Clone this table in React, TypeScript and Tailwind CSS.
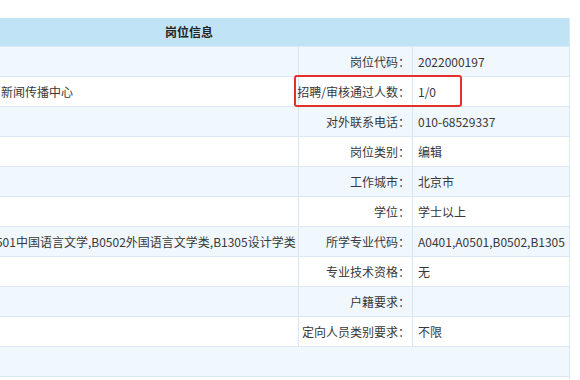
import React from "react"

const rows: { left?: React.ReactNode, label?: string, value?: string }[] = [
    { label: "岗位代码：", value: "2022000197" },
    { left: "新闻传播中心", label: "招聘/审核通过人数：", value: "1/0" },
    { label: "对外联系电话：", value: "010-68529337" },
    { label: "岗位类别：", value: "编辑" },
    { label: "工作城市：", value: "北京市" },
    { label: "学位：", value: "学士以上" },
    {
        // text runs past both edges of the cell in the original page
        left: <span className="-ml-[19px] whitespace-nowrap">A0501中国语言文学,B0502外国语言文学类,B1305设计学类</span>,
        label: "所学专业代码：",
        value: "A0401,A0501,B0502,B1305",
    },
    { label: "专业技术资格：", value: "无" },
    { label: "户籍要求：", value: "" },
    { label: "定向人员类别要求：", value: "不限" },
]

export default function App() {
    return (
        <div
            className="w-[580px] h-[380px] overflow-hidden bg-white pt-[18px] text-[12px] text-[#383838] relative"
            style={{ fontFamily: '"Noto Sans CJK SC", "Noto Sans", sans-serif' }}
        >
            <div className="w-[570px] border-r border-[#d9eaf6]">
                {/* header */}
                <div className="h-[28px] bg-[#c0e4f6] flex items-center pl-[165px] font-bold text-[#222]">
                    岗位信息
                </div>
                {rows.map((r, i) => (
                    <div
                        key={i}
                        className={
                            "grid grid-cols-[299px_114px_157px] h-[30px] border-t border-[#dce9f4] " +
                            (i % 2 === 0 ? "bg-[#f0f7fd]" : "bg-white")
                        }
                    >
                        <div className="flex items-center overflow-hidden pl-[1px] border-r border-[#d6e7f4]">
                            {r.left}
                        </div>
                        <div className="flex items-center justify-end pr-[2px] whitespace-nowrap border-r border-[#d6e7f4]">
                            {r.label}
                        </div>
                        <div className="flex items-center pl-[5px] whitespace-nowrap overflow-hidden">
                            {r.value}
                        </div>
                    </div>
                ))}
                <div className="h-[30px] border-t border-[#dce9f4] bg-[#f0f7fd]" />
                <div className="h-[30px] border-t border-[#dce9f4] bg-white" />
            </div>

            {/* red highlight box */}
            <div className="absolute left-[294px] top-[75px] w-[168px] h-[32px] border-2 border-[#e2322b] rounded-[3px]" />
        </div>
    )
}
